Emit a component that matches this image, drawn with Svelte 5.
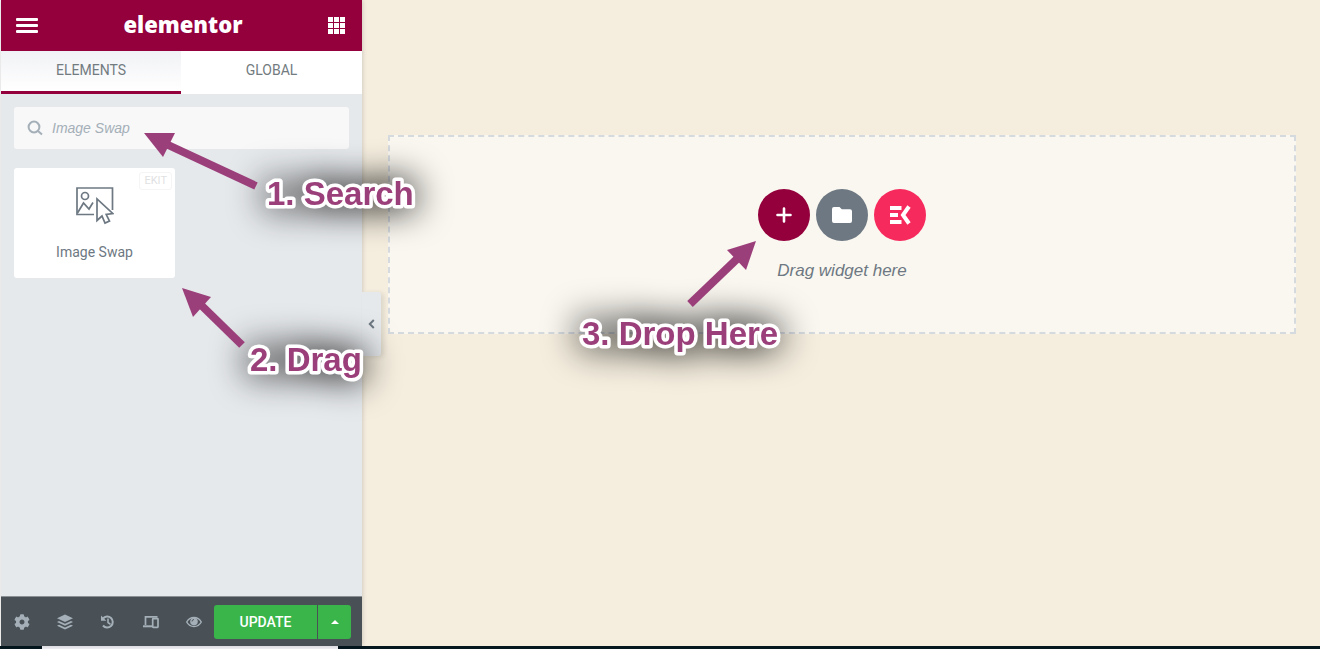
<script>
  // Page builder editor: widget panel on the left, drop canvas on the right,
  // with three numbered tutorial callouts on top.

  let search = $state('');

  // svg coords are local to each callout box
  const callouts = [
    { id: 'first', text: '1. Search', tx: 123, ty: 72, line: [112, 53, 22, 11], head: '0,0 31,0 19,24' },
    { id: 'second', text: '2. Drag', tx: 68, ty: 83, line: [60, 57, 18, 16], head: '0,0 29,9 11,29' },
  ];
  const drop = { id: 'third', text: '3. Drop Here', tx: 1, ty: 104, line: [109, 63, 159, 15], head: '175,0 165,29 146,9' };
</script>

{#snippet callout(c)}
  <svg class="callout {c.id}" width="280" height="120" viewBox="0 0 280 120">
    <text class="glow" x={c.tx} y={c.ty}>{c.text}</text>
    <line x1={c.line[0]} y1={c.line[1]} x2={c.line[2]} y2={c.line[3]} />
    <polygon points={c.head} />
  </svg>
{/snippet}

<div class="page">
  <div class="editor">
    <aside class="panel">
      <header class="topbar">
        <button class="bare" aria-label="Menu">
          <svg width="22" height="16" viewBox="0 0 22 16" fill="#fff">
            <rect y="0" width="22" height="3" rx="1" />
            <rect y="6" width="22" height="3" rx="1" />
            <rect y="12" width="22" height="3" rx="1" />
          </svg>
        </button>
        <span class="logo">elementor</span>
        <button class="bare" aria-label="Widgets">
          <svg width="18" height="18" viewBox="0 0 18 18" fill="#fff">
            {#each [0, 6, 12] as y}
              {#each [0, 6, 12] as x}
                <rect {x} {y} width="5" height="5" />
              {/each}
            {/each}
          </svg>
        </button>
      </header>

      <nav class="tabs">
        <button class="tab active">ELEMENTS</button>
        <button class="tab">GLOBAL</button>
      </nav>

      <div class="body">
        <label class="search">
          <svg width="16" height="16" viewBox="0 0 16 16" fill="none" stroke="#a4afb7" stroke-width="2">
            <circle cx="7" cy="7" r="5.4" />
            <path d="M11 11l4 3.500" />
          </svg>
          <input type="text" placeholder="Image Swap" aria-label="Search widget" bind:value={search} />
        </label>

        <div class="widgets">
          <button class="widget">
            <span class="badge">EKIT</span>
            <svg width="38" height="38" viewBox="0 0 38 38" fill="none" stroke="#6d7882" stroke-width="1.7">
              <path d="M18 27.500H1V1h35.500v22" />
              <circle cx="9" cy="9" r="3.500" />
              <path d="M1.500 26l6-10 5.500 6 4-6.500" />
              <path d="M21 12v21.500l5-4.500 3 7 4.500-2-3.300-6.500 6.500-1z" />
            </svg>
            <span>Image Swap</span>
          </button>
        </div>
      </div>

      <footer class="bottombar">
        <div class="tools">
          <button class="bare" aria-label="Settings">
            <svg width="16" height="16" viewBox="0 0 512 512" fill="#a4afb7">
              <path d="M487.400 315.700l-42.600-24.600c4.300-23.200 4.300-47 0-70.200l42.600-24.600c4.900-2.800 7.100-8.600 5.500-14-11.100-35.600-30-67.800-54.700-94.600-3.800-4.100-10-5.100-14.800-2.300L380.800 110c-17.900-15.400-38.500-27.300-60.800-35.100V25.800c0-5.600-3.900-10.500-9.400-11.700-36.700-8.200-74.300-7.800-109.200 0-5.500 1.200-9.400 6.100-9.400 11.700V75c-22.200 7.900-42.800 19.800-60.800 35.100L88.700 85.500c-4.900-2.800-11-1.900-14.800 2.300-24.700 26.700-43.600 58.900-54.700 94.600-1.700 5.400.6 11.200 5.500 14L67.300 221c-4.300 23.200-4.300 47 0 70.200l-42.600 24.600c-4.900 2.800-7.100 8.600-5.500 14 11.100 35.600 30 67.800 54.700 94.600 3.800 4.100 10 5.100 14.800 2.300l42.600-24.600c17.900 15.400 38.500 27.300 60.800 35.100v49.200c0 5.600 3.900 10.500 9.400 11.700 36.700 8.200 74.300 7.800 109.200 0 5.500-1.200 9.400-6.100 9.400-11.700v-49.200c22.200-7.900 42.800-19.800 60.800-35.100l42.600 24.600c4.900 2.800 11 1.900 14.800-2.300 24.700-26.700 43.600-58.900 54.700-94.600 1.500-5.500-.7-11.300-5.600-14.100zM256 336c-44.100 0-80-35.900-80-80s35.900-80 80-80 80 35.900 80 80-35.900 80-80 80z" />
            </svg>
          </button>
          <button class="bare" aria-label="Navigator">
            <svg width="16" height="16" viewBox="0 0 16 16" fill="#a4afb7">
              <path d="M8 0.500l8 3.700-8 3.700-8-3.700z" />
              <path d="M0 8l2-1 6 2.800L14 7l2 1-8 3.700z" />
              <path d="M0 11.800l2-1 6 2.800 6-2.800 2 1-8 3.700z" />
            </svg>
          </button>
          <button class="bare" aria-label="History">
            <svg width="16" height="16" viewBox="0 0 16 16" fill="none" stroke="#a4afb7" stroke-width="2">
              <path d="M3 4.500a5.500 5.500 0 1 1 0 7" />
              <path d="M8 4.500v4l2.500 1.800" stroke-width="1.600" />
              <path d="M1 1.500v5.300h5.300z" fill="#a4afb7" stroke="none" />
            </svg>
          </button>
          <button class="bare" aria-label="Responsive mode">
            <svg width="16" height="16" viewBox="0 0 16 16" fill="none" stroke="#a4afb7" stroke-width="1.700">
              <path d="M2.500 11V2.800h12" />
              <path d="M0 12.300h9" stroke-width="2" />
              <rect x="9.700" y="4.700" width="5.300" height="8.600" rx="0.500" />
            </svg>
          </button>
          <button class="bare" aria-label="Preview changes">
            <svg width="16" height="16" viewBox="0 0 16 16">
              <path d="M0.700 8C4 2 12 2 15.300 8 12 14 4 14 0.700 8z" fill="none" stroke="#a4afb7" stroke-width="1.400" />
              <circle cx="8" cy="7.500" r="3.800" fill="#a4afb7" />
              <path d="M6 7.500a2 2 0 0 1 2-2" fill="none" stroke="#495157" stroke-width="0.900" />
            </svg>
          </button>
        </div>
        <div class="publish">
          <button class="update">UPDATE</button>
          <button class="more" aria-label="Save options">
            <svg width="8" height="4" viewBox="0 0 8 4" fill="#fff"><path d="M4 0l4 4H0z" /></svg>
          </button>
        </div>
      </footer>

      <button class="collapse" aria-label="Hide panel">
        <svg width="7" height="10" viewBox="0 0 7 10" fill="none" stroke="#6d7882" stroke-width="2"><path d="M5.800 1L1.800 5l4 4" /></svg>
      </button>

      {#each callouts as c (c.id)}
        {@render callout(c)}
      {/each}
    </aside>

    <main class="canvas">
      <section class="dropzone">
        <div class="actions">
          <button class="round add" aria-label="Add new section">
            <svg width="16" height="16" viewBox="0 0 16 16" stroke="#fff" stroke-width="2.600" stroke-linecap="round"><path d="M8 1.500v13M1.500 8h13" /></svg>
          </button>
          <button class="round folder" aria-label="Add template">
            <svg width="20" height="16" viewBox="0 0 20 16" fill="#fff"><path d="M2 0h5.500l2.300 2.300H18a2 2 0 0 1 2 2V14a2 2 0 0 1-2 2H2a2 2 0 0 1-2-2V2a2 2 0 0 1 2-2z" /></svg>
          </button>
          <button class="round kit" aria-label="ElementsKit">
            <svg width="22" height="20" viewBox="0 0 22 20" fill="#fff">
              <path d="M1 1h11.500v4H1zM1 8h8v4H1zM1 15h11.500v4H1z" />
              <path d="M20 1.500L14 10l6 8.500" fill="none" stroke="#fff" stroke-width="4" />
            </svg>
          </button>
        </div>
        <p class="hint">Drag widget here</p>
        {@render callout(drop)}
      </section>
    </main>
  </div>

  <div class="taskbar"><div class="task"></div></div>
</div>

<style>
  :global(body) {
    margin: 0;
  }

  .page {
    min-height: 100vh;
    display: flex;
    flex-direction: column;
    font-family: Roboto, 'Liberation Sans', sans-serif;
    overflow: hidden;
    color: #6d7882;
  }

  button {
    font: inherit;
    color: inherit;
    border: 0;
    padding: 0;
    cursor: pointer;
  }

  svg {
    display: block;
  }

  .bare {
    background: none;
  }

  .editor {
    flex: 1;
    display: grid;
    grid-template-columns: 361px 1fr;
    padding-left: 1px;
  }

  .panel {
    position: relative;
    z-index: 1;
    display: flex;
    flex-direction: column;
    background: #e6e9ec;
    box-shadow: 0 0 5px rgba(0, 0, 0, 0.2);
  }

  .topbar {
    display: flex;
    align-items: center;
    justify-content: space-between;
    height: 51px;
    padding: 0 16px 0 15px;
    background: #93003c;
  }

  .logo {
    padding-bottom: 4px;
    font-family: 'Open Sans', sans-serif;
    font-size: 22px;
    font-weight: 800;
    line-height: 24px;
    color: #fff;
  }

  .tabs {
    display: grid;
    grid-template-columns: 180px 1fr;
    height: 43px;
  }

  .tab {
    background: #fff;
    font-size: 14px;
    color: #727b80;
    padding-bottom: 5px;
  }

  .tab.active {
    background: linear-gradient(#f1f2f5, #fff);
    border-bottom: 3px solid #93003c;
    padding-bottom: 2px;
  }

  .body {
    flex: 1;
    padding: 13px;
  }

  .search {
    display: flex;
    align-items: center;
    gap: 9px;
    height: 42px;
    padding: 0 13px;
    border-radius: 3px;
    background: #f8f8f9;
  }

  .search input {
    flex: 1;
    min-width: 0;
    padding: 0;
    border: 0;
    outline: 0;
    background: none;
    font: italic 14px 'Liberation Sans', sans-serif;
    color: #6d7882;
  }

  .search input::placeholder {
    color: #a4afb7;
  }

  .widgets {
    display: grid;
    grid-template-columns: 1fr 1fr;
    gap: 13px;
    margin-top: 19px;
  }

  .widget {
    position: relative;
    display: flex;
    flex-direction: column;
    align-items: center;
    gap: 18px;
    height: 110px;
    padding-top: 19px;
    border-radius: 3px;
    background: #fff;
    font-size: 14px;
    line-height: 18px;
  }

  .badge {
    position: absolute;
    top: 4px;
    right: 3px;
    padding: 0 4px;
    border: 1px solid #f5f5f6;
    border-radius: 3px;
    font-size: 11px;
    line-height: 16px;
    color: #dfe1e3;
  }

  .bottombar {
    display: flex;
    align-items: center;
    justify-content: space-between;
    height: 49px;
    padding: 0 11px 0 13px;
    border-top: 1px solid #8b9095;
    background: #495157;
  }

  .tools {
    display: flex;
    gap: 27px;
  }

  .publish {
    display: flex;
    gap: 1px;
    height: 34px;
  }

  .update {
    width: 103px;
    border-radius: 3px 0 0 3px;
    background: #39b54a;
    color: #fff;
    font-size: 14px;
    font-weight: 500;
  }

  .more {
    display: grid;
    place-items: center;
    width: 33px;
    border-radius: 0 3px 3px 0;
    background: #39b54a;
  }

  .collapse {
    position: absolute;
    top: 292px;
    left: 100%;
    display: grid;
    place-items: center;
    width: 19px;
    height: 64px;
    border-radius: 0 3px 3px 0;
    background: #e6e9ec;
    box-shadow: 3px 1px 5px rgba(0, 0, 0, 0.1);
  }

  .canvas {
    padding: 135px 24px 48px 26px;
    background: #f5eedf;
  }

  .dropzone {
    position: relative;
    display: flex;
    flex-direction: column;
    align-items: center;
    gap: 20px;
    padding: 52px 0 51px;
    border: 2px dashed #d5dadf;
    background: #faf7f0;
  }

  .actions {
    display: flex;
    gap: 6px;
  }

  .round {
    display: grid;
    place-items: center;
    width: 52px;
    height: 52px;
    border-radius: 50%;
  }

  .add {
    background: #93003c;
  }

  .folder {
    background: #6d7882;
  }

  .kit {
    background: #f62a5c;
  }

  .hint {
    margin: 0;
    font: italic 17px/20px 'Liberation Sans', sans-serif;
  }

  .callout {
    position: absolute;
    overflow: visible;
    pointer-events: none;
    fill: #9b3f7a;
    font: bold 33px 'Liberation Sans', sans-serif;
  }

  .callout line {
    stroke: #9b3f7a;
    stroke-width: 8;
  }

  .glow {
    stroke: #fff;
    stroke-width: 7;
    stroke-linejoin: round;
    paint-order: stroke;
    filter: drop-shadow(0 0 18px #000);
  }

  .first {
    top: 133px;
    left: 143px;
  }

  .second {
    top: 288px;
    left: 181px;
  }

  .third {
    top: 104px;
    left: calc(50% - 261px);
  }

  .taskbar {
    height: 3px;
    padding: 0 42px;
    background: #06171f;
  }

  .task {
    width: 296px;
    height: 3px;
    background: #f3f2f7;
  }
</style>
